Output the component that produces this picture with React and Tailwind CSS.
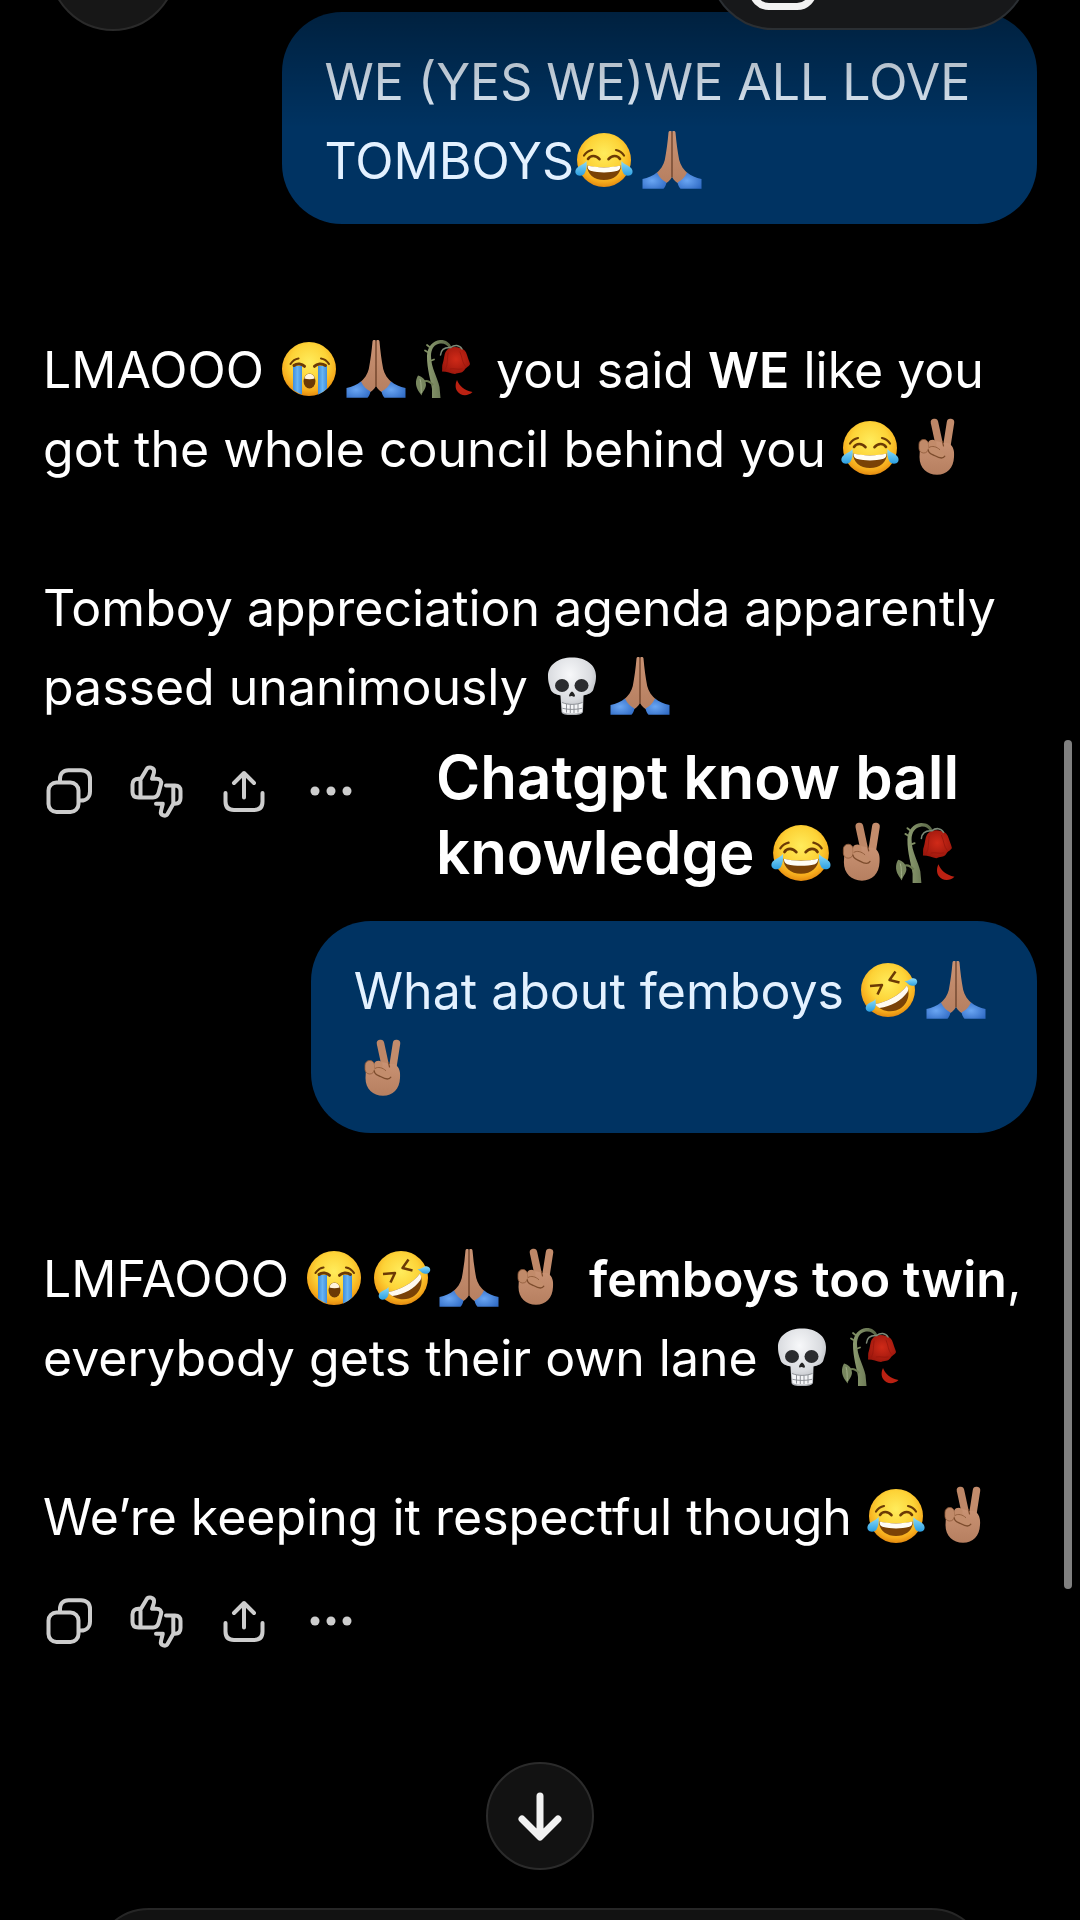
import React from "react";
import clsx from "clsx";

const SKIN = "url(#skin)";
const FACE = "url(#face)";
const TEAR = "url(#tear)";
const BROWN = "#6b3a05";

// shared gradients for all emoji drawings
const EmojiDefs = () => (
  <svg className="absolute h-0 w-0" aria-hidden="true">
    <defs>
      <radialGradient id="face" cx="0.5" cy="0.38" r="0.62">
        <stop offset="0" stopColor="#ffec5c" />
        <stop offset="0.55" stopColor="#fdd337" />
        <stop offset="0.85" stopColor="#f6ab1c" />
        <stop offset="1" stopColor="#e38a10" />
      </radialGradient>
      <linearGradient id="tear" x1="0" y1="0" x2="0" y2="1">
        <stop offset="0" stopColor="#8fdcf8" />
        <stop offset="1" stopColor="#2b9fe2" />
      </linearGradient>
      <linearGradient id="stream" x1="0" y1="0" x2="1" y2="0">
        <stop offset="0" stopColor="#3f8ede" />
        <stop offset="0.5" stopColor="#67b4f3" />
        <stop offset="1" stopColor="#3f8ede" />
      </linearGradient>
      <linearGradient id="skin" x1="0" y1="0" x2="0" y2="1">
        <stop offset="0" stopColor="#c99273" />
        <stop offset="1" stopColor="#b67f60" />
      </linearGradient>
      <radialGradient id="sleeve" cx="0.4" cy="0.5" r="0.7">
        <stop offset="0" stopColor="#6aa6f3" />
        <stop offset="1" stopColor="#2f6ac4" />
      </radialGradient>
      <radialGradient id="bone" cx="0.45" cy="0.3" r="0.75">
        <stop offset="0" stopColor="#f7f8fa" />
        <stop offset="0.6" stopColor="#d9dbdf" />
        <stop offset="1" stopColor="#a3a6ab" />
      </radialGradient>
      <radialGradient id="petal" cx="0.5" cy="0.45" r="0.6">
        <stop offset="0" stopColor="#d02a18" />
        <stop offset="1" stopColor="#9a160c" />
      </radialGradient>
      <linearGradient id="stem" x1="0" y1="0" x2="1" y2="0">
        <stop offset="0" stopColor="#8c9b70" />
        <stop offset="1" stopColor="#566343" />
      </linearGradient>
    </defs>
  </svg>
);

const drawings = {
  joy: (
    <>
      <circle cx="30" cy="30" r="27" fill={FACE} />
      <g fill="none" stroke={BROWN} strokeWidth="2.2" strokeLinecap="round">
        <path d="M10 25.5C12 22.5 14.5 20.8 18 20" />
        <path d="M50 25.5C48 22.5 45.5 20.8 42 20" />
        <path d="M14 29C16.5 25 22 25 25.5 29.2" strokeWidth="2.6" />
        <path d="M34.5 29.2C38 25 43.5 25 46 29" strokeWidth="2.6" />
      </g>
      <path d="M13 35.5C22 38 38 38 47 35.5C47 44 40 50 30 50S13 44 13 35.5Z" fill="#7a4206" />
      <path d="M13.5 35.6C22 38 38 38 46.5 35.6C46.5 38.5 45.5 40 43.5 40.8C35 43 25 43 16.5 40.8C14.5 40 13.5 38.5 13.5 35.6Z" fill="#fffdf5" />
      <path d="M12.5 31C13 36 12.5 40 10.5 43.5C8.5 46.5 3.5 46.5 1.8 43.5C0.5 40.5 2.5 37.5 5.5 36C8.5 34.5 11 33 12.5 31Z" fill={TEAR} />
      <path d="M47.5 31C47 36 47.5 40 49.5 43.5C51.5 46.5 56.5 46.5 58.2 43.5C59.5 40.5 57.5 37.5 54.5 36C51.5 34.5 49 33 47.5 31Z" fill={TEAR} />
    </>
  ),
  sob: (
    <>
      <circle cx="31" cy="30" r="27" fill={FACE} />
      <path d="M15 27H24V55.5C20.5 54.3 17.5 52.5 15 50.5Z" fill="url(#stream)" />
      <path d="M40 27H49V49.5C46.5 52 43.5 54 40 55.5Z" fill="url(#stream)" />
      <g fill="none" stroke={BROWN} strokeLinecap="round">
        <path d="M12.5 25C14.5 22 17 20 20.5 19.5" strokeWidth="2.1" />
        <path d="M51 25C49 22 46.5 20 43 19.5" strokeWidth="2.1" />
        <path d="M16 26.5C19 24 24 24.5 26.5 27.3" strokeWidth="3" />
        <path d="M36.5 27.3C39 24.5 44 24 47.5 26.5" strokeWidth="3" />
      </g>
      <ellipse cx="31.5" cy="42" rx="6" ry="7.5" fill={BROWN} />
      <path d="M26.3 39.5C27.5 35.6 29.5 34.8 31.5 34.8S35.5 35.6 36.7 39.5C33.5 40.6 29.5 40.6 26.3 39.5Z" fill="#fff4dc" />
    </>
  ),
  rofl: (
    <>
      <circle cx="30" cy="30" r="27" fill={FACE} />
      <path d="M12 26L24 25L19.5 34.5" fill="none" stroke={BROWN} strokeWidth="2.5" strokeLinejoin="round" />
      <path d="M37.5 11.5L31.5 20L41.5 22.5" fill="none" stroke={BROWN} strokeWidth="2.5" strokeLinejoin="round" />
      <path d="M17 44C28 42.5 42 35 49 25.5C53.5 36 48 47.5 38 50.5C30 52.8 21.5 50 17 44Z" fill="#7a4206" />
      <path d="M17 44C28 42.5 42 35 49 25.5C50.3 28 50.5 30 49.5 32C43.5 40.5 33 46.5 21.5 48C19.5 47 18 45.7 17 44Z" fill="#fffaf0" />
      <path d="M46.5 21C50.5 21.2 52.5 18 55.5 18.2C58.5 18.5 59.8 20.8 59 23C58 26 54 26.5 51.5 25C49.5 24 48.5 22 46.5 21Z" fill={TEAR} />
      <path d="M17.5 39C17.5 42.5 18.5 44.5 17 48C15.5 51.5 11.5 52.5 9.3 51C7 49.3 7.3 46 9.8 44C12.5 42 15.5 41.8 17.5 39Z" fill={TEAR} />
    </>
  ),
  pray: (
    <>
      <path d="M26.5 2.5C26.8 0.6 29.7 0.6 29.9 2.5V47C28.5 50 25.5 53 22 54L13.5 44C18.5 40 21.5 35 22.8 30C24.5 21 25.7 12 26.5 2.5Z" fill={SKIN} />
      <path d="M33.5 2.5C33.2 0.6 30.3 0.6 30.1 2.5V47C31.5 50 34.5 53 38 54L46.5 44C41.5 40 38.5 35 37.2 30C35.5 21 34.3 12 33.5 2.5Z" fill={SKIN} />
      <path d="M30 2V47" stroke="#6f4026" strokeWidth="1.2" />
      <path d="M0.5 49C6 48 11 45.5 15 42.5C17.5 47.5 20.5 50.5 24.5 52.5C24 55 23 57 21.5 58.8H0.5Z" fill="url(#sleeve)" />
      <path d="M59.5 49C54 48 49 45.5 45 42.5C42.5 47.5 39.5 50.5 35.5 52.5C36 55 37 57 38.5 58.8H59.5Z" fill="url(#sleeve)" />
    </>
  ),
  peace: (
    <>
      <path d="M26.5 4.5L32 30" stroke="#be8767" strokeWidth="7.5" strokeLinecap="round" />
      <path d="M42.5 4.5L38.5 30" stroke="#c38c6c" strokeWidth="7.5" strokeLinecap="round" />
      <path d="M12 29C18 25 26 22 32 24C36 26 40 24 42 26C45.5 29 46.5 33 46 39C45.5 50 39 56.8 29 56.8C19 56.8 11.5 50 11.5 39Z" fill={SKIN} />
      <path d="M34.5 23.5L35.5 28" stroke="#7c4c2d" strokeWidth="1.2" strokeLinecap="round" />
      <rect x="11" y="21.5" width="9.5" height="13.5" rx="4.7" fill="#c08a69" stroke="#8f5b3a" strokeWidth="0.8" />
      <path d="M20.5 24C22 21 28 21 28.5 25V31H20.5Z" fill="#c28b6a" />
      <path d="M20.5 31C22 28.5 27 28.5 31 31.5C35 34 38 35.5 36.5 38.5C35 40.8 30.5 39.5 27 37.5C23.5 36 20 35.5 20.5 31Z" fill="#c38d6c" />
      <path d="M20.3 32C20.5 36 24 36 27 37.8C30.5 39.8 35 41 36.8 38.2" fill="none" stroke="#7c4c2d" strokeWidth="1.3" strokeLinecap="round" />
      <path d="M21 29.5C24 27.5 28.5 28.5 32 31.8" fill="none" stroke="#8f5b3a" strokeWidth="0.9" />
    </>
  ),
  skull: (
    <>
      <path d="M30 1.5C44 1.5 54 9 54 20C54 26.5 52.5 29 51.5 33C50.5 37 46 38.5 41.5 39.5L41 56C40 58.5 36 59 30 59S20 58.5 19.5 56L18.5 39.5C14 38.5 9.5 37 8.5 33C7.5 29 6 26.5 6 20C6 9 16 1.5 30 1.5Z" fill="url(#bone)" />
      <ellipse cx="20" cy="29.5" rx="7" ry="6.5" fill="#2b2c2f" />
      <ellipse cx="39.5" cy="29.5" rx="7" ry="6.5" fill="#2b2c2f" />
      <path d="M30 35.5C31.5 36 33 38.5 33 40C32.5 41.3 31 40.5 30 40S27.5 41.3 27 40C27 38.5 28.5 36 30 35.5Z" fill="#222" />
      <path d="M20 46.5C26 49 34 49 40.5 46.5L40 56C35 58 25 58 20.5 56Z" fill="#f4f5f7" />
      <path d="M20 46.5C26 49 34 49 40.5 46.5M24.5 48V56.5M28.3 48.4V57M32 48.4V57M36 48V56.5M20.5 52.3C26 53.8 34 53.8 40 52.3" fill="none" stroke="#85888d" strokeWidth="0.9" />
    </>
  ),
  rose: (
    <>
      <path d="M18 59L18 50C17 42 12.8 30 13 17C13.2 8 19 1.5 26 1C32 0.8 35.5 3.5 37.5 8L35.5 9.5C33 5.5 30 4 26 4.5C20.5 5 17 10 17 17C17 29 23.5 38 25.5 48L26.5 59Z" fill="url(#stem)" />
      <path d="M13.5 13L11 11.5M16 22L20 20.5M15.5 8L13 6" stroke="#7f8e63" strokeWidth="1.8" strokeLinecap="round" />
      <path d="M19 46C15.5 42 12 41 9 43" fill="none" stroke="#6c7a52" strokeWidth="2" />
      <path d="M4 36.5C8.5 37.5 12 41 12 46C11.5 50.5 8.5 52.5 7.5 56.5C5 52.5 2.5 50 2 45C1.8 41.5 2.5 39 4 36.5Z" fill="#77865e" />
      <path d="M6 40C7.5 44 7 50 7.3 54" fill="none" stroke="#a5b18b" strokeWidth="0.9" />
      <path d="M33 11C36 7.5 42 7.5 46 9C49.5 9.5 52 12 53 16C54 19.5 55.5 22.5 56 25C55.5 27.5 52 28 50.5 31C48 34.5 44.5 33.5 41 35C37 34.5 33 32.5 28 32.5C28.5 29.5 27.5 27 29 23.5C30.5 19 30 14 33 11Z" fill="url(#petal)" />
      <path d="M34 14C33 20 34 26 31.5 30M46 13C48.5 18 48 24 51.5 27.5M36 30C40 29 44 31 48 30" fill="none" stroke="#97160c" strokeWidth="0.8" strokeLinecap="round" />
      <path d="M26.5 16C27 10.5 31 8 37 8.5M36.5 8.5C40.5 5.5 45.5 5.5 48 10" fill="none" stroke="#7d8a78" strokeWidth="1.5" strokeLinecap="round" />
      <path d="M43 41C45 46.5 50 51.5 58.5 53C54 57.5 46.5 57 43.5 52.5C41 49.5 41.2 44.5 43 41Z" fill="#bb2112" />
    </>
  ),
};

const Emoji = ({ name, label, large }) => (
  <svg
    viewBox="0 0 60 60"
    role="img"
    aria-label={label}
    className={clsx(
      "inline-block overflow-visible",
      large ? "h-[62px] w-[62px] align-[-10px]" : "mr-2 h-15 w-15 align-[-11px]"
    )}
  >
    {drawings[name]}
  </svg>
);

const Joy = (props) => <Emoji name="joy" label="😂" {...props} />;
const Sob = (props) => <Emoji name="sob" label="😭" {...props} />;
const Rofl = (props) => <Emoji name="rofl" label="🤣" {...props} />;
const Pray = (props) => <Emoji name="pray" label="🙏🏽" {...props} />;
const Peace = (props) => <Emoji name="peace" label="✌🏽" {...props} />;
const Skull = (props) => <Emoji name="skull" label="💀" {...props} />;
const Rose = (props) => <Emoji name="rose" label="🥀" {...props} />;

const actions = [
  {
    label: "Copy",
    icon: (
      <>
        <rect x="5.5" y="17.5" width="30" height="29.5" rx="8" />
        <path d="M17 16.5V14C17 8.5 20 5.2 25.5 5.2H38C43.5 5.2 47 8.5 47 14V26.5C47 32 43.5 35.6 38 35.6H36.5" />
      </>
    ),
  },
  {
    label: "Rate response",
    icon: (
      <>
        <path d="M10.5 14.5L16.5 4.5C18 1 25 2 24 7.5L22 13.8H26.5C30 13.8 31.8 16 31 19L28.7 27.5C27.8 31.2 26 32.5 23 32.5H8.5C4.8 32.5 2.5 30.5 2.5 27V19.5C2.5 15.8 4.8 13.8 8.5 13.8H10.5V32" />
        <path d="M36 20.5H45C48.6 20.5 50.5 22.5 50.5 26V33C50.5 36.5 48.6 38.7 45 38.7H43.3L37.8 48.5C36 52.3 29.8 50.5 31 46L32.8 38.7H26M43.3 21V38.5" />
      </>
    ),
  },
  {
    label: "Share",
    icon: (
      <path d="M27 32.5V8M17 18L27 8L37 18M8.5 28V36.5C8.5 42 11.5 45 17 45H37C42.5 45 45.5 42 45.5 36.5V28" />
    ),
  },
  {
    label: "More",
    icon: (
      <g fill="currentColor" stroke="none">
        <circle cx="11" cy="26" r="4.5" />
        <circle cx="27" cy="26" r="4.5" />
        <circle cx="43" cy="26" r="4.5" />
      </g>
    ),
  },
];

const ActionBar = () => (
  <div className="mt-[38px] flex gap-[35px] text-[#cdcdcd]">
    {actions.map(({ label, icon }) => (
      <button key={label} type="button" aria-label={label} className="h-13 w-13">
        <svg
          viewBox="0 0 52 52"
          className="h-13 w-13 overflow-visible"
          fill="none"
          stroke="currentColor"
          strokeWidth="4"
          strokeLinecap="round"
          strokeLinejoin="round"
        >
          {icon}
        </svg>
      </button>
    ))}
  </div>
);

const UserMessage = ({ children }) => (
  <div className="max-w-[76%] self-end rounded-[60px] bg-[#003362] px-[43px] pt-[31px] pb-[23px] text-[#e3f1ff]">
    <p>{children}</p>
  </div>
);

const Reply = ({ children, caption }) => (
  <article className="relative mt-[107px] mb-[104px] whitespace-nowrap text-white">
    <div className="flex flex-col gap-20">{children}</div>
    <ActionBar />
    {caption}
  </article>
);

const Caption = () => (
  <p className="absolute bottom-[-73px] left-[393px] text-[60px] leading-[75px] font-semibold text-white">
    Chatgpt know ball
    <br />
    knowledge <Joy large />
    <Peace large />
    <Rose large />
  </p>
);

const TopBar = () => (
  <header className="absolute inset-x-0 top-0">
    <div className="h-32 bg-linear-to-b from-black/40 to-transparent" />
    <button
      type="button"
      aria-label="Menu"
      className="absolute -top-[97px] left-[49px] h-32 w-32 rounded-full border-2 border-[#2a2a2a] bg-[#171717]"
    />
    <div className="absolute -top-[98px] right-[51px] flex h-32 w-80 items-end rounded-full border-2 border-[#2b2f33] bg-[#17181a] pb-[18px] pl-[38px]">
      <button type="button" aria-label="New chat" className="h-16 w-17 rounded-[20px] border-[7px] border-[#f2f2f2]" />
    </div>
  </header>
);

export default function App() {
  return (
    <div className="relative min-h-screen overflow-hidden bg-black font-[Inter,'Liberation_Sans',sans-serif]">
      <EmojiDefs />
      <main className="flex flex-col px-[43px] pt-3 text-[50px] leading-[79px]">
        <UserMessage>
          WE (YES WE)WE ALL LOVE TOMBOYS
          <Joy />
          <Pray />
        </UserMessage>

        <Reply caption={<Caption />}>
          <p>
            LMAOOO <Sob />
            <Pray />
            <Rose /> you said <strong className="font-semibold">WE</strong> like you
            <br />
            got the whole council behind you <Joy />
            <Peace />
          </p>
          <p>
            Tomboy appreciation agenda apparently
            <br />
            passed unanimously <Skull />
            <Pray />
          </p>
        </Reply>

        <UserMessage>
          What about femboys <Rofl />
          <Pray />
          <br />
          <Peace />
        </UserMessage>

        <Reply>
          <p>
            LMFAOOO <Sob />
            <Rofl />
            <Pray />
            <Peace /> <strong className="font-semibold">femboys too twin</strong>,
            <br />
            everybody gets their own lane <Skull />
            <Rose />
          </p>
          <p>
            We’re keeping it respectful though <Joy />
            <Peace />
          </p>
        </Reply>
      </main>

      <TopBar />
      <div className="absolute top-[740px] right-2 h-[849px] w-2 rounded-full bg-[#808080]" />

      <button
        type="button"
        aria-label="Scroll to bottom"
        className="fixed bottom-[50px] left-1/2 h-27 w-27 -translate-x-1/2 rounded-full border-2 border-[#2b2b2b] bg-[#121212]"
      >
        <svg
          viewBox="2 2 104 104"
          className="h-full w-full"
          fill="none"
          stroke="#f1f1f1"
          strokeWidth="7"
          strokeLinecap="round"
          strokeLinejoin="round"
        >
          <path d="M54 34V74M36 57L54 75L72 57" />
        </svg>
      </button>
      <div className="fixed inset-x-[93px] -bottom-[100px] h-28 rounded-[56px] border-2 border-[#262626] bg-[#121212]" />
    </div>
  );
}
